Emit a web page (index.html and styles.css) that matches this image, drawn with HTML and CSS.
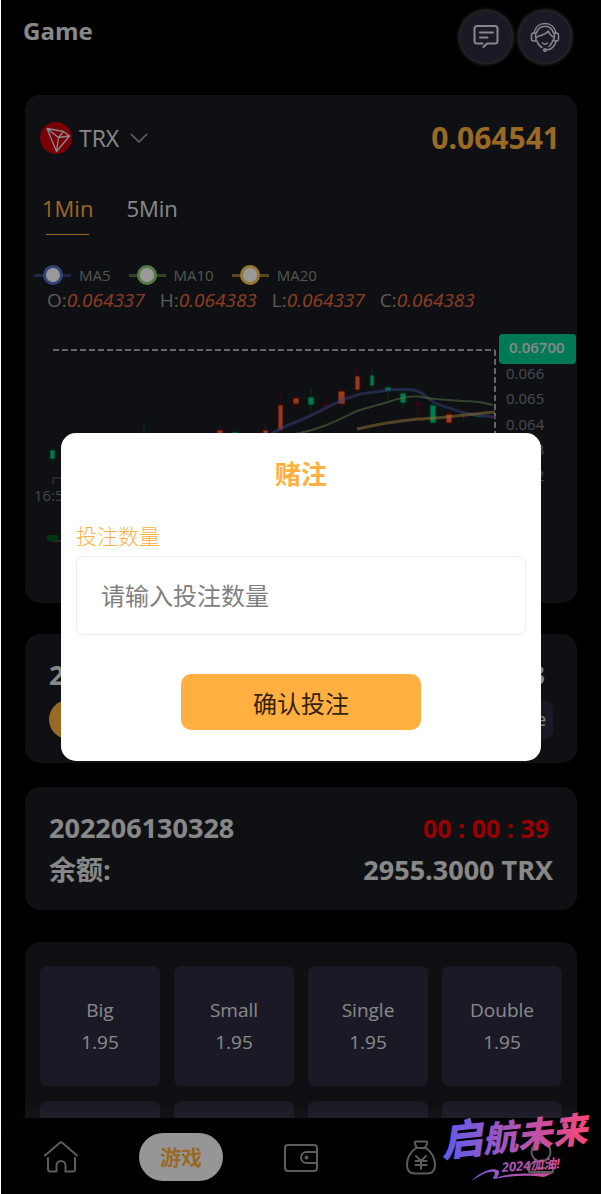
FILE: index.html
```
<!DOCTYPE html>
<html lang="zh-CN">
<head>
    <meta charset="UTF-8">
    <meta name="viewport" content="width=device-width, initial-scale=1.0">
    <title>Game</title>
    <link rel="stylesheet" href="styles.css">
</head>
<body>
    <div class="app">
        <header class="header">
            <h1>Game</h1>
            <div class="header-btns">
                <button type="button" class="round-btn" aria-label="Message">
                    <svg width="28" height="28" viewBox="0 0 28 28">
                        <path d="M10.5 20.5H5a2.5 2.5 0 0 1-2.500-2.500V5.500A2.500 2.500 0 0 1 5 3h18a2.500 2.500 0 0 1 2.500 2.500V18a2.500 2.500 0 0 1-2.500 2.500h-8L11.500 24M8 9.500h13M8 14.500h7.500"/>
                    </svg>
                </button>
                <button type="button" class="round-btn" aria-label="Service">
                    <svg class="thin" width="30" height="30" viewBox="0 0 30 30">
                        <path d="M4 11.500C5 5 9.500 1.500 15 1.500s10 3.500 11 10M6.500 11C8 6.500 11 4.300 15 4.300s7 2.200 8.500 6.700"/>
                        <path d="M5.500 11H3.500a2 2 0 0 0-2 2v4a2 2 0 0 0 2 2h2.500zM24.500 11H26.500a2 2 0 0 1 2 2v4a2 2 0 0 1-2 2h-2.500z"/>
                        <path d="M6.500 15.500c2-2.500 8-1.500 12-6.500 1 3 2.500 5 5 6M7 19c1 3.500 3 5.500 5 6.500M23 18c-.8 3-2 5-4 6.500M12.500 21c1.500 1.500 3.500 1.500 5 0M26 19.500C24.500 25 21 27.500 16.500 28"/>
                        <circle cx="15" cy="28" r="1.300"/>
                    </svg>
                </button>
            </div>
        </header>

        <main class="content">
            <section class="card chart-card">
                <div class="coin-row">
                    <button type="button" class="coin">
                        <svg width="32" height="32" viewBox="0 0 32 32">
                            <circle cx="16" cy="16" r="16" fill="#cc000d"/>
                            <path d="M7 6.500l16.500 3L29.500 14 16.500 29.500zM7 6.500l11.500 9L29.500 14M18.500 15.500L23.500 9.500M18.500 15.500l-2 14" fill="none" stroke="#e5e5e5" stroke-width="1.300" stroke-linejoin="round"/>
                        </svg>
                        <span>TRX</span>
                        <svg class="arrow" width="18" height="12" viewBox="0 0 18 12"><path d="M1 2l8 8 8-8"/></svg>
                    </button>
                    <strong class="price">0.064541</strong>
                </div>

                <div class="tabs">
                    <button type="button" class="tab active">1Min</button>
                    <button type="button" class="tab">5Min</button>
                </div>

                <div class="legend">
                    <span class="ma ma5"><i></i>MA5</span>
                    <span class="ma ma10"><i></i>MA10</span>
                    <span class="ma ma20"><i></i>MA20</span>
                </div>
                <div class="ohlc">
                    <span>O:<em>0.064337</em></span>
                    <span>H:<em>0.064383</em></span>
                    <span>L:<em>0.064337</em></span>
                    <span>C:<em>0.064383</em></span>
                </div>

                <svg class="chart" viewBox="25 315 552 280">
                    <path class="axis" d="M53 484v-6h442M52 541h443"/>
                    <path class="cross" d="M53 350h442M495 350v128"/>
                    <!-- wicks -->
                    <path class="wick-up" d="M220 427v14M265.500 424v16M281 394v39M296 395v16M326 396v15M322 405h8M341.500 390v20M357 364v34M418 402v15M413 404h9M449 411v13M490 417h8"/>
                    <path class="wick-down" d="M53 447v15M144 422v14M235 429v10M311 388v23M372 369v19M388 384v16M403 391v18M433 402v23M463.500 411v10M460 414h7"/>
                    <!-- candle bodies -->
                    <path class="up" d="M217 430h6v9h-6zM263 430h5v9h-5zM278 405h5v25h-5zM293 398h6v6h-6zM338 391h7v13h-7zM355 376h5v14h-5zM446 414h6v9h-6z"/>
                    <path class="down" d="M50 450h5v9h-5zM232 432h6v8h-6zM308 397h6v8h-6zM370 375h4v11h-4zM385 387h6v4h-6zM400 393h6v10h-6zM430 405h6v18h-6zM475 416h7v1h-7z"/>
                    <path class="vol" d="M47 535h11v6h-11z"/>
                    <!-- moving averages -->
                    <path class="line5" d="M268 436C280 428 290 424 301 420C322 411 338 400 357 395C368 392 380 392 391 389.500H409C424 390 426 400 440 405C455 410 470 416 495 417"/>
                    <path class="line10" d="M290 435C320 430 338 420 357 411C370 407 382 404 391 401C400 398 410 396 418 396.500C430 399 448 400 463 401C475 401 486 403 493 405"/>
                    <path class="line20" d="M357 429C370 426 388 422 418 419C445 418 470 414 495 412"/>
                    <g class="labels">
                        <text x="506" y="379">0.066</text>
                        <text x="506" y="404">0.065</text>
                        <text x="506" y="430">0.064</text>
                        <text x="506" y="455">0.063</text>
                        <text x="506" y="481">0.062</text>
                        <text class="time" x="34" y="501">16:59</text>
                    </g>
                    <rect x="499" y="334" width="77" height="30" rx="4" fill="#00cb8c"/>
                    <text class="badge-text" x="509" y="353">0.06700</text>
                </svg>
            </section>

            <section class="card last-card">
                <div class="row">
                    <strong>202206130327</strong>
                    <strong class="result">064383</strong>
                </div>
                <div class="row">
                    <span class="tag tag-on">Big</span>
                    <span class="tag">Double</span>
                </div>
            </section>

            <section class="card info-card">
                <div class="row">
                    <strong>202206130328</strong>
                    <strong class="timer">00 : 00 : 39</strong>
                </div>
                <div class="row">
                    <strong>余额:</strong>
                    <strong>2955.3000 TRX</strong>
                </div>
            </section>

            <section class="card bets">
                <button type="button" class="bet">Big<span>1.95</span></button>
                <button type="button" class="bet">Small<span>1.95</span></button>
                <button type="button" class="bet">Single<span>1.95</span></button>
                <button type="button" class="bet">Double<span>1.95</span></button>
                <button type="button" class="bet"></button>
                <button type="button" class="bet"></button>
                <button type="button" class="bet"></button>
                <button type="button" class="bet"></button>
            </section>
        </main>

        <nav class="tabbar">
            <a href="#" aria-label="Home">
                <svg width="36" height="36" viewBox="0 0 36 36">
                    <path d="M2 16.500L16.500 4q1.500-1.200 3 0L34 16.500M5 19v11.500q0 2 2 2h6.500v-6a4.500 4.500 0 0 1 9 0v6H30q2 0 2-2V19"/>
                </svg>
            </a>
            <a href="#" class="current"><span>游戏</span></a>
            <a href="#" aria-label="Wallet">
                <svg width="36" height="36" viewBox="0 0 36 36">
                    <rect x="2" y="6" width="32" height="26" rx="3"/>
                    <path d="M34 13H23.500a5.500 5.500 0 0 0 0 11H34"/>
                    <circle cx="23.500" cy="18.500" r="1"/>
                </svg>
            </a>
            <a href="#" aria-label="Money">
                <svg width="36" height="36" viewBox="0 0 36 36">
                    <path d="M14 9l-2-4q-.8-2.500 1.500-2.500h9q2.300 0 1.500 2.500l-2 4zM13 9C7.500 13 4 19 4 26q0 8.500 8 8.500h12q8 0 8-8.500c0-7-3.500-13-9-17M13 17l5 5 5-5M18 22v8M12.500 22h11M12.500 26h11"/>
                </svg>
            </a>
            <a href="#" aria-label="Mine">
                <svg width="36" height="36" viewBox="0 0 36 36">
                    <circle cx="18" cy="13" r="9.500"/>
                    <path d="M11 23.500c-4 1-5 3-5 9.500h24c0-6.500-1-8.500-5-9.500M14 29h8"/>
                </svg>
            </a>
        </nav>

        <div class="mask">
            <form class="dialog">
                <h2>赌注</h2>
                <label for="amount">投注数量</label>
                <input type="text" id="amount" name="amount" placeholder="请输入投注数量">
                <button type="button" class="confirm">确认投注</button>
            </form>
        </div>

        <svg class="slogan" width="160" height="94" viewBox="0 0 160 94">
            <defs>
                <linearGradient id="ink" gradientUnits="userSpaceOnUse" x1="5" y1="0" x2="150" y2="0">
                    <stop offset="0" stop-color="#5b5cf0"/>
                    <stop offset=".5" stop-color="#a855b8"/>
                    <stop offset="1" stop-color="#f0487c"/>
                </linearGradient>
            </defs>
            <g fill="url(#ink)">
                <text class="slogan-big" x="6" y="57" transform="rotate(-6 6 57)"><tspan class="slogan-first">启</tspan>航未来</text>
                <text class="slogan-small" x="66" y="72" transform="rotate(-4 66 72)">2024加油!</text>
                <path d="M35 81C45 72 56 66 63 71C64 75 59 79 62 77C78 72 98 74 117 73L108 77C94 75 76 75 58 79C55 78 61 74 58 72C51 71 46 75 35 81z"/>
            </g>
        </svg>
    </div>
</body>
</html>
```
FILE: styles.css
```
*, *::before, *::after {
    box-sizing: border-box;
}

body {
    margin: 0 1px;
    background-color: #fff;
    font-family: "Open Sans", "Noto Sans CJK SC", sans-serif;
    color: #e3e3e3;
}

button, input {
    font-family: inherit;
    color: inherit;
    border: none;
    background: none;
    padding: 0;
}

button {
    cursor: pointer;
}

h1, h2 {
    margin: 0;
}

.app {
    position: relative;
    height: 100vh;
    overflow: hidden;
    background-color: #000;
}

/* header */
.header {
    display: flex;
    justify-content: space-between;
    align-items: flex-start;
    height: 95px;
    padding: 11px 30px 0 22px;
}

.header h1 {
    font-size: 24px;
    line-height: 40px;
}

.header-btns {
    display: flex;
    gap: 7px;
}

.round-btn {
    display: flex;
    align-items: center;
    justify-content: center;
    width: 52px;
    height: 52px;
    border-radius: 50%;
    background-color: #2d2b3e;
    box-shadow: 0 0 5px #999;
}

.round-btn svg {
    fill: none;
    stroke: #e3e3e3;
    stroke-width: 2;
    stroke-linecap: round;
    stroke-linejoin: round;
}

.round-btn .thin {
    stroke-width: 1.5;
}

/* cards */
.content {
    padding: 0 24px;
}

.card {
    border-radius: 15px;
    background-color: #191b20;
}

.coin-row {
    display: flex;
    justify-content: space-between;
    align-items: center;
    padding: 22px 17px 0 15px;
}

.coin {
    display: flex;
    align-items: center;
    gap: 7px;
    font-size: 23px;
    line-height: 32px;
}

.arrow {
    margin-left: 4px;
    fill: none;
    stroke: #aaa;
    stroke-width: 1.5;
}

.price {
    font-size: 30px;
    line-height: 42px;
    color: #ffb040;
}

.tabs {
    display: flex;
    gap: 33px;
    padding: 29px 17px 0;
}

.tab {
    position: relative;
    padding-bottom: 10px;
    font-size: 22px;
    line-height: 40px;
}

.tab.active {
    color: #ffb040;
}

.tab.active::after {
    content: "";
    position: absolute;
    left: 4px;
    right: 4px;
    bottom: 3px;
    height: 1px;
    background-color: #ffb040;
}

.legend {
    display: flex;
    gap: 18px;
    padding: 27px 9px 0;
    font-size: 15px;
    line-height: 20px;
    color: #8f8f88;
}

.ma {
    display: flex;
    align-items: center;
    gap: 8px;
}

.ma i {
    display: flex;
    align-items: center;
    justify-content: center;
    width: 37px;
    height: 3px;
    background-color: #34436f;
}

.ma i::before {
    content: "";
    flex: none;
    width: 20px;
    height: 20px;
    border: 3px solid #5470c6;
    border-radius: 50%;
    background-color: #fff;
}

.ma10 i {
    background-color: #4d7240;
}

.ma10 i::before {
    border-color: #91cc75;
}

.ma20 i {
    background-color: #96783a;
}

.ma20 i::before {
    border-color: #fac858;
}

.ohlc {
    display: flex;
    gap: 15px;
    padding: 1px 22px 0;
    font-size: 19px;
    line-height: 29px;
    color: #999;
}

.ohlc em {
    color: #eb6a3c;
}

.chart {
    display: block;
    width: 100%;
    padding-bottom: 8px;
    font-size: 15px;
}

.chart path {
    fill: none;
}

.chart .axis {
    stroke: #6e7079;
}

.chart .cross {
    stroke: #ccc;
    stroke-width: 2;
    stroke-dasharray: 6 3;
    opacity: .8;
}

.chart .up {
    fill: #eb6a3c;
    stroke: #8a0000;
}

.chart .down {
    fill: #00cb8c;
    stroke: #004d1c;
}

.chart .wick-up {
    stroke: #8a0010;
}

.chart .wick-down {
    stroke: #005c1c;
}

.chart .vol {
    fill: #005c1c;
}

.chart .line5, .chart .line20 {
    stroke: #5470c6;
    stroke-width: 3;
    opacity: .5;
}

.chart .line10 {
    stroke: #91cc75;
    stroke-width: 2;
    opacity: .5;
}

.chart .line20 {
    stroke: #fac858;
}

.labels {
    fill: #777f8e;
}

.labels .time {
    fill: #777;
}

.badge-text {
    fill: #e3e3e3;
    font-weight: 600;
}

/* rounds */
.last-card {
    margin-top: 31px;
    padding: 20px 24px 24px;
}

.row {
    display: flex;
    justify-content: space-between;
    align-items: center;
    font-size: 27px;
    line-height: 42px;
}

.last-card .row + .row {
    margin-top: 4px;
}

.result {
    margin-right: 8px;
}

.tag {
    padding: 0 7px;
    border-radius: 8px;
    background-color: #2d2b3e;
    font-size: 18px;
    line-height: 39px;
}

.tag-on {
    padding: 0 24px;
    border-radius: 20px;
    background-color: #ffb040;
}

.info-card {
    margin-top: 24px;
    padding: 20px 24px 19px;
}

.timer {
    margin-right: 4px;
    font-size: 25px;
    color: #f00;
}

.bets {
    display: grid;
    grid-template-columns: repeat(4, 1fr);
    gap: 15px 14px;
    margin-top: 32px;
    padding: 24px 15px;
}

.bet {
    display: flex;
    flex-direction: column;
    align-items: center;
    justify-content: center;
    height: 120px;
    border-radius: 7px;
    background-color: #2d2b3e;
    font-size: 19px;
    line-height: 32px;
}

/* bottom bar */
.tabbar {
    position: absolute;
    left: 0;
    right: 0;
    bottom: 0;
    display: flex;
    align-items: center;
    height: 76px;
    padding-top: 2px;
    border-radius: 24px 24px 0 0;
    background-color: #000;
    box-shadow: 0 0 30px rgba(255, 255, 255, .06);
}

.tabbar a {
    flex: 1;
    display: flex;
    justify-content: center;
    color: #ffb040;
    text-decoration: none;
}

.tabbar svg {
    fill: none;
    stroke: #999;
    stroke-width: 2;
    stroke-linecap: round;
    stroke-linejoin: round;
}

.current span {
    padding: 0 21px;
    border-radius: 24px;
    background-color: #fafafc;
    font-size: 21px;
    font-weight: bold;
    line-height: 48px;
}

/* bet dialog */
.mask {
    position: absolute;
    inset: 0;
    display: flex;
    align-items: center;
    justify-content: center;
    background-color: rgba(0, 0, 0, .4);
}

.dialog {
    display: flex;
    flex-direction: column;
    width: 80%;
    padding: 21px 15px 31px;
    border-radius: 15px;
    background-color: #fff;
    color: #ffb040;
}

.dialog h2 {
    font-size: 26px;
    line-height: 40px;
    text-align: center;
}

.dialog label {
    margin-top: 27px;
    font-size: 21px;
    font-weight: 300;
    line-height: 30px;
}

.dialog input {
    width: 100%;
    height: 79px;
    margin-top: 5px;
    padding: 0 24px;
    border: 1px solid #eee;
    border-radius: 7px;
    font-size: 24px;
    color: #333;
}

.dialog input::placeholder {
    color: #808080;
}

.confirm {
    align-self: center;
    width: 240px;
    height: 56px;
    margin-top: 39px;
    border-radius: 10px;
    background-color: #ffb040;
    font-size: 24px;
    color: #33230d;
}

.slogan {
    position: absolute;
    right: 5px;
    bottom: 0;
    overflow: visible;
}

.slogan-big {
    font-size: 35px;
    font-weight: 900;
    font-style: italic;
}

.slogan-first {
    font-size: 42px;
}

.slogan-small {
    font-size: 13px;
    font-weight: bold;
    font-style: italic;
}
```
